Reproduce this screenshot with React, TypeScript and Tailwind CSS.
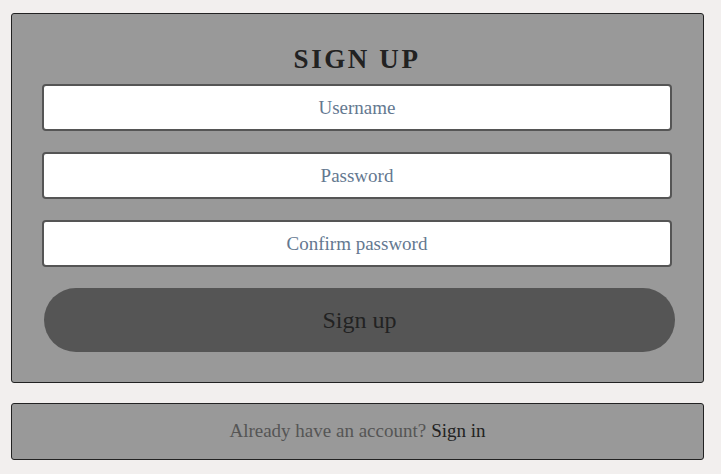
export default function App() {
  return (
    <div className="min-h-[474px] w-[721px] bg-[#f2efee] pl-[11px] pt-[13px] font-['Liberation_Serif',serif]">
      <div className="w-[693px] rounded-[3px] border border-[#222] bg-[#999] pl-[30px] pr-[31px] pb-[30px] pt-[26px]">
        <h1 className="mb-[5px] text-center text-[27px] leading-[39px] font-bold tracking-[2.6px] text-[#222]">
          SIGN UP
        </h1>
        <form className="flex flex-col gap-[21px]" onSubmit={(e) => e.preventDefault()}>
          <input
            placeholder="Username"
            className="h-[47px] w-full rounded-[4px] border-2 border-[#555] bg-white text-center text-[19px] text-[#333] placeholder:text-[#647890] outline-none"
          />
          <input
            type="password"
            placeholder="Password"
            className="h-[47px] w-full rounded-[4px] border-2 border-[#555] bg-white text-center text-[19px] text-[#333] placeholder:text-[#647890] outline-none"
          />
          <input
            type="password"
            placeholder="Confirm password"
            className="h-[47px] w-full rounded-[4px] border-2 border-[#555] bg-white text-center text-[19px] text-[#333] placeholder:text-[#647890] outline-none"
          />
          <button
            type="submit"
            className="ml-[2px] -mr-[3px] h-[64px] rounded-full bg-[#555] text-[24px] text-[#222]"
          >
            Sign up
          </button>
        </form>
      </div>
      <div className="mt-[20px] flex h-[57px] w-[693px] items-center justify-center rounded-[3px] border border-[#222] bg-[#999] text-[19px]">
        <span className="text-[#555]">Already have an account?</span>
        <a href="#" className="ml-[5px] text-[#222]">
          Sign in
        </a>
      </div>
    </div>
  )
}
